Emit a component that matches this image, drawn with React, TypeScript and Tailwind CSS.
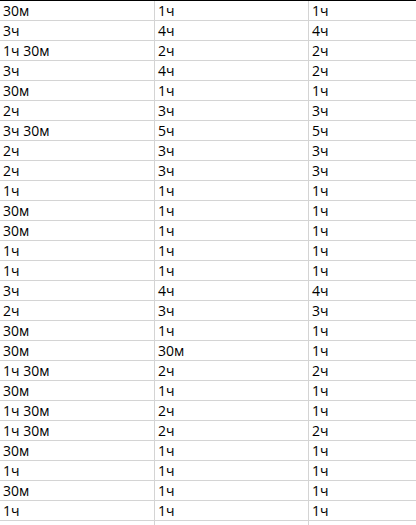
const rows: [string, string, string][] = [
  ["30м", "1ч", "1ч"],
  ["3ч", "4ч", "4ч"],
  ["1ч 30м", "2ч", "2ч"],
  ["3ч", "4ч", "2ч"],
  ["30м", "1ч", "1ч"],
  ["2ч", "3ч", "3ч"],
  ["3ч 30м", "5ч", "5ч"],
  ["2ч", "3ч", "3ч"],
  ["2ч", "3ч", "3ч"],
  ["1ч", "1ч", "1ч"],
  ["30м", "1ч", "1ч"],
  ["30м", "1ч", "1ч"],
  ["1ч", "1ч", "1ч"],
  ["1ч", "1ч", "1ч"],
  ["3ч", "4ч", "4ч"],
  ["2ч", "3ч", "3ч"],
  ["30м", "1ч", "1ч"],
  ["30м", "30м", "1ч"],
  ["1ч 30м", "2ч", "2ч"],
  ["30м", "1ч", "1ч"],
  ["1ч 30м", "2ч", "1ч"],
  ["1ч 30м", "2ч", "2ч"],
  ["30м", "1ч", "1ч"],
  ["1ч", "1ч", "1ч"],
  ["30м", "1ч", "1ч"],
  ["1ч", "1ч", "1ч"],
  ["", "", ""],
];

export default function App() {
  return (
    <div className="w-[416px] h-[525px] overflow-hidden bg-white border-t border-black font-['Open_Sans',Arial,sans-serif] text-[14px] text-black">
      <div className="grid grid-cols-[155px_154px_1fr]">
        {rows.map((r, i) =>
          r.map((c, j) => (
            <div
              key={i + "-" + j}
              className={
                "h-[20px] border-b border-[#d4d4d4] pl-[3px] leading-[19px] whitespace-nowrap " +
                (j < 2 ? "border-r" : "")
              }
            >
              {c}
            </div>
          ))
        )}
      </div>
    </div>
  );
}
